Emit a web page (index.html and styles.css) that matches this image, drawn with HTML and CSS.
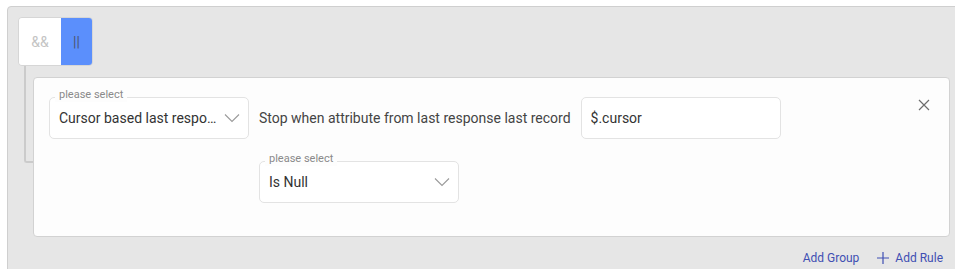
FILE: index.html
```html
<!DOCTYPE html>
<html>
<head>
<meta charset="utf-8">
<link rel="stylesheet" href="styles.css">
</head>
<body>
<div class="outer">
  <div class="combinator">
    <button class="comb-btn">&amp;&amp;</button>
    <button class="comb-btn active">||</button>
  </div>
  <div class="children">
    <div class="card">
      <div class="rule">
        <div class="rule-main">
          <div class="row">
            <div class="field select">
              <span class="label">please select</span>
              <span class="value">Cursor based last response last record</span>
              <svg class="chev" width="16" height="10" viewBox="0 0 16 10"><path d="M1 1.5 L8 8.5 L15 1.5" fill="none" stroke="#9a9a9a" stroke-width="1.1"/></svg>
            </div>
            <span class="text">Stop when attribute from last response last record</span>
            <div class="field input">
              <span class="value">$.cursor</span>
            </div>
          </div>
          <div class="row row2">
            <div class="field select">
              <span class="label">please select</span>
              <span class="value">Is Null</span>
              <svg class="chev" width="16" height="10" viewBox="0 0 16 10"><path d="M1 1.5 L8 8.5 L15 1.5" fill="none" stroke="#9a9a9a" stroke-width="1.1"/></svg>
            </div>
          </div>
        </div>
        <button class="close" aria-label="remove">
          <svg width="12" height="12" viewBox="0 0 12 12"><path d="M1 1 L11 11 M11 1 L1 11" fill="none" stroke="#6d6d6d" stroke-width="1.2"/></svg>
        </button>
      </div>
    </div>
    <div class="actions">
      <a class="action">Add Group</a>
      <a class="action">
        <svg width="12" height="12" viewBox="0 0 12 12"><path d="M6 0 V12 M0 6 H12" fill="none" stroke="#3f4fb3" stroke-width="1.2"/></svg>
        Add Rule
      </a>
    </div>
  </div>
</div>
</body>
</html>
```

FILE: styles.css
```css
html, body {
  margin: 0;
  padding: 0;
  background: #ffffff;
  overflow: hidden;
  font-family: Roboto, "Liberation Sans", sans-serif;
}

.outer {
  margin: 6px 0 0 7px;
  width: 958px;
  height: 300px;
  box-sizing: border-box;
  background: #e6e6e6;
  border: 1px solid #cfcfcf;
  border-radius: 4px;
  padding: 10px 0 0 10px;
}

.combinator {
  display: flex;
  width: 75px;
  height: 49px;
  border: 1px solid #d6d6d6;
  border-radius: 4px;
  overflow: hidden;
  box-sizing: border-box;
}

.comb-btn {
  border: none;
  margin: 0;
  padding: 0;
  font-family: Roboto, "Liberation Sans", sans-serif;
  font-size: 14px;
  background: #ffffff;
  color: #c4c4c4;
  width: 43px;
  height: 100%;
}

.comb-btn.active {
  background: #5b8ffc;
  color: #4b5670;
  width: 32px;
}

.children {
  position: relative;
  width: 917px;
  padding-left: 15px;
  padding-top: 11px;
}

.children::before {
  content: "";
  position: absolute;
  left: 6px;
  top: 0;
  width: 9px;
  height: 95px;
  border-left: 2px solid #cbcbcb;
  border-bottom: 2px solid #cbcbcb;
  border-bottom-left-radius: 3px;
}

.card {
  position: relative;
  box-sizing: border-box;
  width: 917px;
  height: 160px;
  background: #fdfdfd;
  border: 1px solid #d2d2d2;
  border-radius: 4px;
  padding: 19px 19px 0 15px;
}

.rule {
  display: flex;
  align-items: flex-start;
}

.rule-main {
  display: flex;
  flex-direction: column;
  gap: 22px;
}

.row {
  display: flex;
  align-items: center;
  gap: 10px;
}

.row2 {
  padding-left: 210px;
}

.field {
  position: relative;
  box-sizing: border-box;
  width: 200px;
  height: 42px;
  border: 1px solid #e3e3e3;
  border-radius: 5px;
  background: #ffffff;
  display: flex;
  align-items: center;
  padding: 0 8px 0 9px;
}

.label {
  position: absolute;
  left: 5px;
  top: -10px;
  padding: 0 4px;
  font-size: 11px;
  line-height: 14px;
  color: #8a8a8a;
  background: #fdfdfd;
}

.value {
  font-size: 14px;
  color: #333333;
  flex: 1;
  white-space: nowrap;
  overflow: hidden;
  text-overflow: ellipsis;
  min-width: 0;
}

.chev {
  flex: none;
  margin-left: 0;
}

.text {
  font-size: 14px;
  color: #444444;
  white-space: nowrap;
}

.close {
  margin-left: auto;
  margin-top: 2px;
  border: none;
  background: transparent;
  padding: 0;
  width: 12px;
  height: 12px;
  display: flex;
}

.actions {
  display: flex;
  justify-content: flex-end;
  gap: 18px;
  padding: 14px 7px 0 0;
}

.action {
  display: flex;
  align-items: center;
  gap: 6px;
  font-size: 12px;
  color: #3f4fb3;
  cursor: pointer;
}
```
